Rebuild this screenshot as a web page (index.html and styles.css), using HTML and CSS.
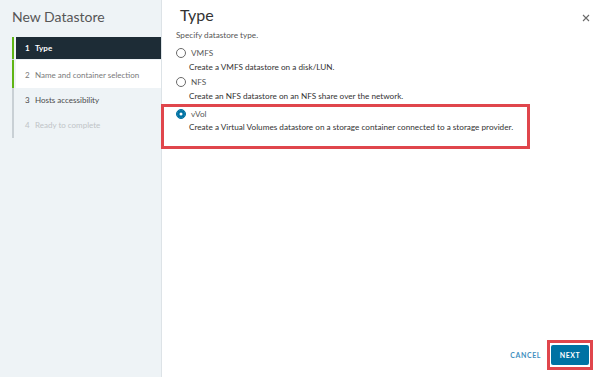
FILE: index.html
```html
<!DOCTYPE html>
<html lang="en">
<head>
    <meta charset="UTF-8">
    <title>New Datastore</title>
    <link rel="stylesheet" href="styles.css">
</head>
<body>
    <div class="wizard">
        <div class="wizard-nav">
            <h1 class="wizard-title">New Datastore</h1>
            <ul class="steps">
                <li class="step active"><span class="num">1</span>Type</li>
                <li class="step done"><span class="num">2</span>Name and container selection</li>
                <li class="step"><span class="num">3</span>Hosts accessibility</li>
                <li class="step disabled"><span class="num">4</span>Ready to complete</li>
            </ul>
        </div>
        <div class="wizard-main">
            <div class="main-header">
                <h2 class="page-title">Type</h2>
                <span class="close">
                    <svg width="8" height="8" viewBox="0 0 8 8"><path d="M1 1L7 7M7 1L1 7" stroke="#6a6a6a" stroke-width="1.1"/></svg>
                </span>
            </div>
            <p class="hint">Specify datastore type.</p>
            <div class="option">
                <label class="radio"><span class="dot"></span>VMFS</label>
                <p class="desc">Create a VMFS datastore on a disk/LUN.</p>
            </div>
            <div class="option">
                <label class="radio"><span class="dot"></span>NFS</label>
                <p class="desc">Create an NFS datastore on an NFS share over the network.</p>
            </div>
            <div class="option highlight">
                <label class="radio"><span class="dot checked"></span>vVol</label>
                <p class="desc">Create a Virtual Volumes datastore on a storage container connected to a storage provider.</p>
            </div>
            <div class="footer">
                <button class="btn-link">CANCEL</button>
                <span class="mark"><button class="btn-primary">NEXT</button></span>
            </div>
        </div>
    </div>
</body>
</html>
```

FILE: styles.css
```css
body {
    margin: 0;
    font-family: Lato, "Open Sans", sans-serif;
    color: #333;
    background: #fff;
}
.wizard {
    display: flex;
    width: 602px;
    height: 377px;
}
.wizard-nav {
    width: 162px;
    background: #eef3f6;
    border-right: 1px solid #dde3e7;
    box-sizing: border-box;
    padding-top: 8px;
}
.wizard-title {
    margin: 0 0 12px 12px;
    font-size: 14px;
    font-weight: 400;
    color: #565656;
}
.steps {
    list-style: none;
    margin: 0 0 0 12px;
    padding: 0;
    border-left: 2px solid #c9d0d5;
}
.step {
    height: 25px;
    line-height: 25px;
    padding-left: 9px;
    font-size: 8px;
    color: #4a4a4a;
    margin-left: 2px;
}
.step .num {
    display: inline-block;
    width: 10px;
}
.step.active {
    height: 22px;
    line-height: 22px;
    background: #1d2c36;
    color: #fff;
    font-weight: 700;
    box-shadow: -2px 0 0 #eef3f6, -4px 0 0 #60b515;
    margin-bottom: 1px;
}
.step.done {
    background: #fff;
    color: #7a7a7a;
    box-shadow: -2px 0 0 #eef3f6, -4px 0 0 #60b515;
    height: 28px;
    line-height: 30px;
}
.step.disabled {
    color: #c0c4c7;
}
.wizard-main {
    flex: 1;
    padding: 0 0 0 14px;
    display: flex;
    flex-direction: column;
}
.main-header {
    display: flex;
    justify-content: space-between;
    align-items: center;
    padding: 5px 12px 0 4px;
}
.page-title {
    margin: 0;
    font-size: 16px;
    font-weight: 400;
    color: #333;
}
.close {
    display: flex;
    padding-top: 6px;
}
.hint {
    margin: 6px 0 7px 0;
    font-size: 8.2px;
    color: #565656;
}
.option {
    margin-bottom: 4px;
}
.radio {
    display: flex;
    align-items: center;
    font-size: 8.2px;
    color: #565656;
    height: 12px;
}
.dot {
    width: 8px;
    height: 8px;
    border: 1px solid #6a6a6a;
    border-radius: 50%;
    margin-right: 5px;
}
.dot.checked {
    background: #0072a3;
    border-color: #0072a3;
    box-shadow: inset 0 0 0 2.5px #0072a3, inset 0 0 0 4px #fff;
}
.desc {
    margin: 3px 0 0 13px;
    font-size: 8.2px;
    color: #333;
}
.option.highlight {
    margin: -1px 0 0 -15px;
    width: 351px;
    border: 3px solid #e0464c;
    padding: 1px 0 14px 12px;
}
.option.highlight .desc {
    margin-top: 2px;
}
.footer {
    margin-top: auto;
    display: flex;
    justify-content: flex-end;
    align-items: center;
    padding: 0 9px 7px 0;
}
.btn-link {
    background: none;
    border: none;
    font-family: inherit;
    font-size: 7px;
    font-weight: 700;
    letter-spacing: 0.6px;
    color: #3f8fc0;
    margin-right: 0;
}
.mark {
    border: 3px solid #e0464c;
    padding: 2px 1px;
    display: flex;
}
.btn-primary {
    background: #0072a3;
    color: #fff;
    border: none;
    border-radius: 2px;
    width: 38px;
    height: 20px;
    font-family: inherit;
    font-size: 7px;
    font-weight: 700;
    letter-spacing: 0.6px;
}
```
